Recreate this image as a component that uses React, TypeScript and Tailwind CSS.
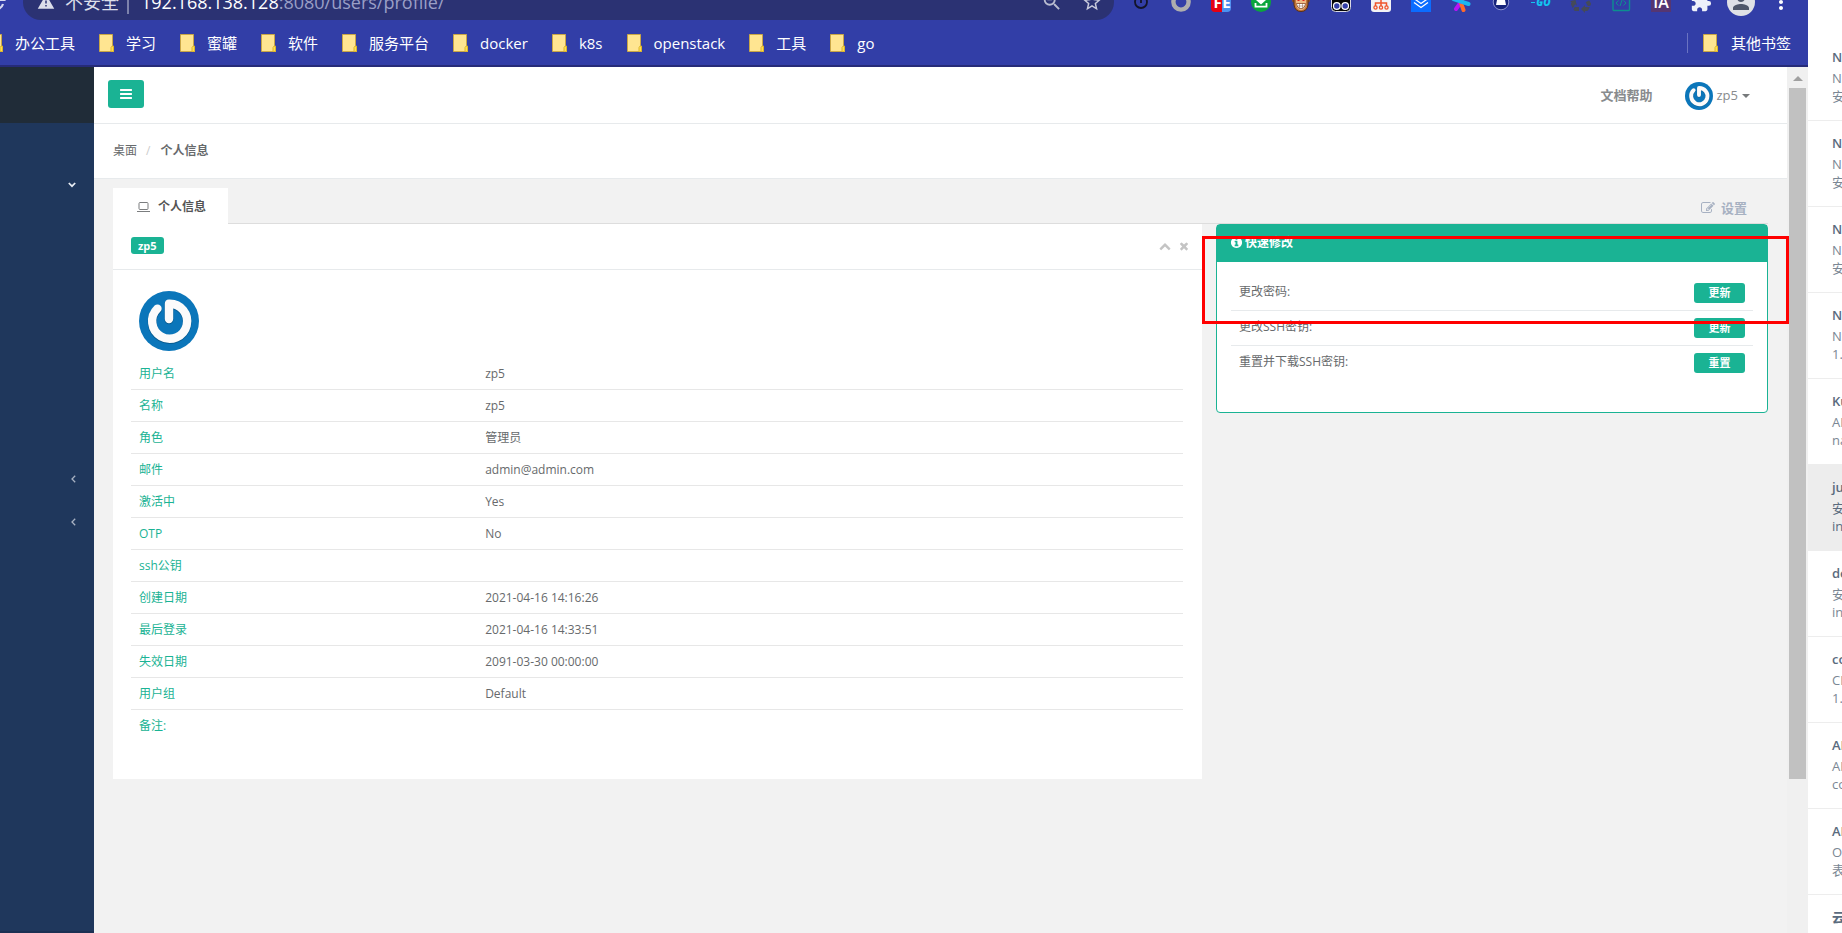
import type { ReactNode } from "react";
import { MdOutlineStarBorder, MdOutlineZoomOut, MdWarning, MdPerson, MdExtension, MdMoreVert, MdRecycling } from "react-icons/md";

const bookmarks = ["办公工具", "学习", "蜜罐", "软件", "服务平台", "docker", "k8s", "openstack", "工具", "go"];

const profile: [string, string][] = [
  ["用户名", "zp5"],
  ["名称", "zp5"],
  ["角色", "管理员"],
  ["邮件", "admin@admin.com"],
  ["激活中", "Yes"],
  ["OTP", "No"],
  ["ssh公钥", ""],
  ["创建日期", "2021-04-16 14:16:26"],
  ["最后登录", "2021-04-16 14:33:51"],
  ["失效日期", "2091-03-30 00:00:00"],
  ["用户组", "Default"],
  ["备注:", ""],
];

const quickActions: [string, string][] = [
  ["更改密码:", "更新"],
  ["更改SSH密钥:", "更新"],
  ["重置并下载SSH密钥:", "重置"],
];

const notes: { lines: [string, string, string]; active?: boolean }[] = [
  { lines: ["NA", "NS", "安"] },
  { lines: ["NA", "NS", "安"] },
  { lines: ["NA", "NS", "安"] },
  { lines: ["NA", "NS", "1."] },
  { lines: ["Ku", "AP", "na"] },
  { lines: ["ju", "安", "in"], active: true },
  { lines: ["de", "安", "in"] },
  { lines: ["co", "CD", "1."] },
  { lines: ["AP", "AP", "co"] },
  { lines: ["AP", "Op", "表"] },
  { lines: ["云", "云", ""] },
];

function Glyph({ d, className }: { d: string; className: string }) {
  return (
    <svg viewBox="0 0 1792 1792" fill="currentColor" className={className} aria-hidden="true">
      <path d={d} />
    </svg>
  );
}

const bars =
  "M1664 1344v128q0 26-19 45t-45 19h-1408q-26 0-45-19t-19-45v-128q0-26 19-45t45-19h1408q26 0 45 19t19 45zm0-512v128q0 26-19 45t-45 19h-1408q-26 0-45-19t-19-45v-128q0-26 19-45t45-19h1408q26 0 45 19t19 45zm0-512v128q0 26-19 45t-45 19h-1408q-26 0-45-19t-19-45v-128q0-26 19-45t45-19h1408q26 0 45 19t19 45z";
const times =
  "M1490 1322q0 40-28 68l-136 136q-28 28-68 28t-68-28l-294-294-294 294q-28 28-68 28t-68-28l-136-136q-28-28-28-68t28-68l294-294-294-294q-28-28-28-68t28-68l136-136q28-28 68-28t68 28l294 294 294-294q28-28 68-28t68 28l136 136q28 28 28 68t-28 68l-294 294 294 294q28 28 28 68z";
const chevronUp =
  "M1683 1331l-166 165q-19 19-45 19t-45-19l-531-531-531 531q-19 19-45 19t-45-19l-166-165q-19-19-19-45.5t19-45.5l742-741q19-19 45-19t45 19l742 741q19 19 19 45.5t-19 45.5z";
const edit =
  "M888 1184l116-116-152-152-116 116v56h96v96h56zm440-720q-16-16-33 1l-350 350q-17 17-1 33t33-1l350-350q17-17 1-33zm80 594v190q0 119-84.5 203.5t-203.5 84.5h-832q-119 0-203.5-84.5t-84.5-203.5v-832q0-119 84.5-203.5t203.5-84.5h832q63 0 117 25 15 7 18 23 3 17-9 29l-49 49q-14 14-32 8-23-6-45-6h-832q-66 0-113 47t-47 113v832q0 66 47 113t113 47h832q66 0 113-47t47-113v-126q0-13 9-22l64-64q15-15 35-7t20 29zm-96-738l288 288-672 672h-288v-288zm444 132l-92 92-288-288 92-92q28-28 68-28t68 28l152 152q28 28 28 68t-28 68z";
const info =
  "M1152 1376v-160q0-14-9-23t-23-9h-96v-512q0-14-9-23t-23-9h-320q-14 0-23 9t-9 23v160q0 14 9 23t23 9h96v320h-96q-14 0-23 9t-9 23v160q0 14 9 23t23 9h448q14 0 23-9t9-23zm-128-896v-160q0-14-9-23t-23-9h-192q-14 0-23 9t-9 23v160q0 14 9 23t23 9h192q14 0 23-9t9-23zm640 416q0 209-103 385.5t-279.5 279.5-385.5 103-385.5-103-279.5-279.5-103-385.5 103-385.5 279.5-279.5 385.5-103 385.5 103 279.5 279.5 103 385.5z";

function Avatar({ className }: { className: string }) {
  return (
    <svg viewBox="0 0 60 60" className={className} role="img" aria-label="avatar">
      <circle cx="30" cy="30" r="30" fill="#0b76ba" />
      <path
        d="M18.5 17.6A17.5 17.5 0 1 0 30 12.7V28"
        transform="translate(0 .8)"
        fill="none"
        stroke="#000"
        strokeOpacity=".22"
        strokeWidth="9"
        strokeLinecap="round"
        strokeLinejoin="round"
      />
      <path
        d="M18.5 17.6A17.5 17.5 0 1 0 30 12.7V28"
        fill="none"
        stroke="#fbfbfb"
        strokeWidth="8.4"
        strokeLinecap="round"
        strokeLinejoin="round"
      />
    </svg>
  );
}

function Folder() {
  return (
    <svg viewBox="0 0 15 18" className="h-[18px] w-[15px] shrink-0" aria-hidden="true">
      <path d="M.5.5h13V12l1 1v4.5H.5z" fill="#ffe591" stroke="#c9a646" />
      <path d="M12 17v-3.5q0-1.5 2.5-1.5v5.5h-2z" fill="#ffe04a" stroke="#dcb52e" />
    </svg>
  );
}

const icon = "size-5";

const extensions: { name: string; art: ReactNode }[] = [
  {
    name: "定时",
    art: (
      <svg viewBox="0 0 20 20" className={icon}>
        <circle cx="10" cy="10" r="6" fill="none" stroke="#12142a" strokeWidth="1.8" />
        <path d="M10 5v6" stroke="#12142a" strokeWidth="1.8" />
      </svg>
    ),
  },
  {
    name: "圆环",
    art: (
      <svg viewBox="0 0 20 20" className={icon}>
        <circle cx="10" cy="10" r="7.6" fill="none" stroke="#aeaeae" strokeWidth="4.4" />
      </svg>
    ),
  },
  {
    name: "FE",
    art: (
      <span className="flex h-5 w-5 overflow-hidden rounded-sm text-[15px] leading-5 font-bold text-white">
        <span className="w-[11px] bg-[#e60012] pl-0.5">F</span>
        <span className="w-[9px] bg-[#4a90f0]">E</span>
      </span>
    ),
  },
  {
    name: "下载",
    art: (
      <svg viewBox="0 0 20 20" className={icon}>
        <circle cx="10" cy="10" r="10" fill="#0ba53c" />
        <path d="M8 4h4v4h3l-5 4.5L5 8h3z" fill="#fff" />
        <path d="M4.5 11v3.6h11V11" fill="none" stroke="#fff" strokeWidth="1.8" />
      </svg>
    ),
  },
  {
    name: "猴子",
    art: (
      <svg viewBox="0 0 20 20" className={icon}>
        <circle cx="3.6" cy="8" r="2.6" fill="#8a4b22" />
        <circle cx="16.4" cy="8" r="2.6" fill="#8a4b22" />
        <path d="M3 4h14v9q-1 6.500-7 6.500T3 13z" fill="#c4763a" stroke="#5c2f12" />
        <path d="M5 8h10v5q-1 5-5 5t-5-5z" fill="#efbb85" />
        <path d="M5.500 11.500h9q-.5 5-4.500 5t-4.500-5z" fill="#fff" stroke="#7b3a14" strokeWidth=".7" />
        <path d="M6 14h8M8.500 11.500v5M11.500 11.500v5" stroke="#7b3a14" strokeWidth=".4" />
        <path d="M7.500 6.500v2.500M12.500 6.500v2.500" stroke="#e0201b" strokeWidth="2" />
      </svg>
    ),
  },
  {
    name: "脚本",
    art: (
      <svg viewBox="0 0 20 20" className={icon}>
        <rect x=".5" y=".5" width="19" height="19" rx="4" fill="#050505" stroke="#d9d9e5" />
        <circle cx="5.800" cy="14" r="3.300" fill="#323ea7" stroke="#fff" strokeWidth="1.200" />
        <circle cx="14.200" cy="14" r="3.300" fill="#323ea7" stroke="#fff" strokeWidth="1.200" />
      </svg>
    ),
  },
  {
    name: "结构",
    art: (
      <svg viewBox="0 0 20 20" className={icon}>
        <rect width="20" height="20" rx="3" fill="#f3f3f5" />
        <path d="M10 6v8M4.500 14v-3h11v3" fill="none" stroke="#f0562b" strokeWidth="1.500" />
        <rect x="7" y="3" width="6" height="4.500" fill="#f0562b" />
        <g fill="none" stroke="#f0562b" strokeWidth="1.300">
          <circle cx="4.500" cy="15.500" r="1.600" />
          <circle cx="10" cy="15.500" r="1.600" />
          <circle cx="15.500" cy="15.500" r="1.600" />
        </g>
      </svg>
    ),
  },
  {
    name: "掘金",
    art: (
      <svg viewBox="0 0 20 20" className={icon}>
        <rect width="20" height="20" fill="#0b6cff" />
        <path d="M3 6.500l7 5 7-5M3 10.500l7 5 7-5" fill="none" stroke="#fff" strokeWidth="1.300" />
      </svg>
    ),
  },
  {
    name: "星形",
    art: (
      <svg viewBox="0 0 20 20" className={icon} strokeWidth="4" strokeLinecap="round">
        <path d="M10 10L5 17" stroke="#b514f5" />
        <path d="M10 11l2.500 7" stroke="#ff6a2b" />
        <path d="M14 3l-4 7" stroke="#f0249a" />
        <path d="M2.500 7l15 5" stroke="#19b6f2" />
      </svg>
    ),
  },
  {
    name: "云盘",
    art: (
      <svg viewBox="0 0 20 20" className={icon}>
        <circle cx="10" cy="10" r="7.800" fill="#17247c" stroke="#8c93cf" />
        <path d="M6 8h2.500V5h3v3H14l1 5H5z" fill="#fff" />
      </svg>
    ),
  },
  {
    name: "GO",
    art: (
      <span className="flex h-5 items-center text-[10px] font-extrabold text-[#12c4f0] italic">
        <span className="mr-px h-px w-1 bg-[#12c4f0]" />
        GO
      </span>
    ),
  },
  { name: "循环", art: <MdRecycling className="size-6 text-[#454a58]" /> },
  {
    name: "代码",
    art: (
      <svg viewBox="0 0 20 20" className={icon} fill="none" stroke="#0c8f8f" strokeWidth="1.400">
        <rect x="2" y="1" width="16.500" height="17.500" rx="1" />
        <path d="M7.500 8.500L5 11l2.500 2.500M12.500 8.500L15 11l-2.500 2.500M11 8l-2 6" strokeWidth="1" />
      </svg>
    ),
  },
  {
    name: "IA",
    art: (
      <span className="flex h-5 w-5 items-center justify-center bg-[#553672] text-base font-semibold text-white">IA</span>
    ),
  },
  { name: "扩展程序", art: <MdExtension className="size-[22px] text-[#eef0fa]" /> },
  {
    name: "用户",
    art: (
      <span className="flex size-7 items-center justify-center overflow-hidden rounded-full bg-[#dfe1e6]">
        <MdPerson className="size-6 text-[#50586a]" />
      </span>
    ),
  },
  { name: "菜单", art: <MdMoreVert className="size-6 text-white" /> },
];

function BrowserChrome() {
  return (
    <header className="flex h-[67px] shrink-0 flex-col overflow-hidden border-b-2 border-[#262b78] bg-[#323ea7] text-white">
      <div className="flex h-5 shrink-0 items-end">
        <div className="flex h-9 w-[23px] shrink-0 items-center overflow-hidden">
          <svg viewBox="0 0 20 20" className="-ml-3.5 size-5 shrink-0" fill="none" stroke="#d5d8f0" strokeWidth="2.200">
            <path d="M17 12a7.500 7.500 0 1 1-2-7.500" />
            <path d="M18.500 2v6h-6" />
          </svg>
        </div>
        <div className="flex h-9 min-w-0 flex-1 items-center rounded-full bg-[#2b3273] pr-[11px] pl-3.5 text-lg leading-6">
          <MdWarning className="size-[18px] shrink-0 text-[#dcdeea]" />
          <span className="ml-2.5 shrink-0 text-[#dcdeea]">不安全</span>
          <span className="mx-2 h-6 w-0.5 shrink-0 bg-[#7d82ab]" />
          <span className="ml-1 flex-1 truncate text-[#9a9fc6]">
            <span className="text-white">192.168.138.128</span>:8080/users/profile/
          </span>
          <button type="button" aria-label="缩小" className="mr-[18px]">
            <MdOutlineZoomOut className="size-[22px] text-[#b9bcd0]" />
          </button>
          <button type="button" aria-label="收藏">
            <MdOutlineStarBorder className="size-[22px] text-[#c9cbdd]" />
          </button>
        </div>
        <div className="ml-[7px] flex h-9 shrink-0 items-center pr-[7px]">
          {extensions.map((e) => (
            <button key={e.name} type="button" aria-label={e.name} className="flex w-10 items-center justify-center">
              {e.art}
            </button>
          ))}
        </div>
      </div>
      <nav className="flex flex-1 items-center pr-[17px] text-[15px] leading-5 whitespace-nowrap">
        <div className="-ml-3 flex items-center gap-6">
          {bookmarks.map((b) => (
            <a key={b} href="#" className="flex items-center gap-3">
              <Folder />
              {b}
            </a>
          ))}
        </div>
        <div className="ml-auto flex items-center">
          <span className="mr-[15px] h-5 w-px bg-[#6a73c2]" />
          <a href="#" className="flex items-center gap-[13px]">
            <Folder />
            其他书签
          </a>
        </div>
      </nav>
    </header>
  );
}

function Sidebar() {
  return (
    <aside className="flex w-[94px] shrink-0 flex-col border-b-2 border-[#1b3053] bg-[#1f375c]">
      <div className="h-14 bg-[#202c38]" />
      <nav className="flex flex-col pt-10">
        <div className="pb-[251px]">
          <button type="button" aria-label="收起" className="flex h-[43px] w-full items-center justify-end pr-[18px]">
            <svg viewBox="0 0 8 6" className="h-1.5 w-2" fill="none" stroke="#e8edf3" strokeWidth="1.700">
              <path d="M.8 1L4 4.200 7.200 1" />
            </svg>
          </button>
        </div>
        {["a", "b"].map((k) => (
          <button key={k} type="button" aria-label="展开" className="flex h-[43px] w-full items-center justify-end pr-[18px]">
            <svg viewBox="0 0 5 8" className="h-2 w-[5px]" fill="none" stroke="#a7b1c2" strokeWidth="1.300">
              <path d="M4.200 .8L1 4l3.200 3.200" />
            </svg>
          </button>
        ))}
      </nav>
    </aside>
  );
}

function Page() {
  return (
    <main className="min-w-0 flex-1 bg-[#f2f2f2] text-xs text-[#676a6c]">
      <div className="flex h-[57px] items-start justify-between border-b border-[#e7eaec] bg-white pr-[37px] pl-3.5">
        <button
          type="button"
          aria-label="切换导航"
          className="mt-[13px] flex h-7 w-9 items-center justify-center rounded-[3px] bg-[#1ab394] text-white"
        >
          <Glyph d={bars} className="size-3.5" />
        </button>
        <div className="flex h-[57px] items-center text-[13px]">
          <a href="#" className="mr-8 font-semibold text-[#888b8d]">
            文档帮助
          </a>
          <a href="#" className="flex items-center text-[#888b8d]">
            <Avatar className="mr-1 size-7" />
            zp5
            <svg viewBox="0 0 8 4" className="ml-1 h-1 w-2" fill="#777a7c" aria-hidden="true">
              <path d="M0 0h8L4 4z" />
            </svg>
          </a>
        </div>
      </div>
      <nav className="flex h-[55px] items-center border-b border-[#e7eaec] bg-white pl-[19px]">
        <a href="#">桌面</a>
        <span className="mr-2.5 ml-[9px] text-[#ccc]">/</span>
        <strong className="font-semibold">个人信息</strong>
      </nav>

      <div className="pt-[9px] pr-[19px] pl-[19px]">
        <div className="flex items-stretch">
          <button
            type="button"
            className="flex h-9 items-center bg-white pt-0.5 pr-[22px] pl-6 font-semibold text-[#555]"
          >
            <svg viewBox="0 0 13 10" className="mr-2 h-2.5 w-[13px]" fill="none" stroke="#7b7d7f" aria-hidden="true">
              <rect x="2" y=".5" width="9" height="7" rx="1" />
              <path d="M0 9.500h13" />
            </svg>
            个人信息
          </button>
          <div className="flex flex-1 items-center justify-end border-b border-[#ddd] pt-1.5 pr-[21px]">
            <a href="#" className="flex items-center gap-1.5 text-[13px] font-semibold text-[#a7b1c2]">
              <Glyph d={edit} className="size-3.5" />
              设置
            </a>
          </div>
        </div>

        <div className="grid grid-cols-[1089fr_552fr] items-start gap-3.5">
          <section className="bg-white pb-[37px]">
            <div className="flex h-[46px] items-center justify-between border-b border-[#e7eaec] pr-3 pb-0.5 pl-[18px]">
              <span className="rounded-[3px] bg-[#1ab394] px-[7px] text-[11px] leading-[17px] font-bold text-white">zp5</span>
              <div className="flex items-center gap-[7px] text-[#c4c4c4]">
                <button type="button" aria-label="折叠">
                  <Glyph d={chevronUp} className="size-3" />
                </button>
                <button type="button" aria-label="关闭">
                  <Glyph d={times} className="size-3" />
                </button>
              </div>
            </div>
            <div className="pt-[21px] pr-[19px] pl-[18px]">
              <Avatar className="mb-[7px] ml-2 size-[60px]" />
              <table className="w-full table-fixed border-separate border-spacing-0">
                <tbody>
                  {profile.map(([label, value]) => (
                    <tr key={label} className="group h-8">
                      <th
                        scope="row"
                        className="w-[33%] border-b border-[#e7e7e7] px-2 text-left font-normal text-[#1ab394] group-last:border-transparent"
                      >
                        {label}
                      </th>
                      <td className="border-b border-[#e7e7e7] px-[7px] group-last:border-transparent">{value}</td>
                    </tr>
                  ))}
                </tbody>
              </table>
            </div>
          </section>

          <section className="relative rounded border border-[#1ab394] bg-white">
            <h2 className="flex h-[37px] items-center gap-0.5 bg-[#1ab394] px-[13px] pb-0.5 text-xs font-semibold text-white">
              <Glyph d={info} className="size-[13px]" />
              快速修改
            </h2>
            <div className="px-3.5 pt-3.5 pb-[31px]">
              <table className="w-full border-separate border-spacing-0">
                <tbody>
                  {quickActions.map(([label, action]) => (
                    <tr key={label} className="group h-[35px]">
                      <td className="border-b border-[#e7eaec] px-2 pb-0.5 group-last:border-transparent">{label}</td>
                      <td className="border-b border-[#e7eaec] px-2 group-last:border-transparent">
                        <button
                          type="button"
                          aria-label={`${label}${action}`}
                          className="ml-auto block h-5 w-[51px] rounded-[3px] bg-[#1ab394] text-[11px] leading-5 font-bold text-white"
                        >
                          {action}
                        </button>
                      </td>
                    </tr>
                  ))}
                </tbody>
              </table>
            </div>
            <div className="pointer-events-none absolute top-[11px] -right-[22px] -left-[15px] z-10 h-[88px] border-3 border-[#ff0000]" />
          </section>
        </div>
      </div>
    </main>
  );
}

function ScrollTrack() {
  return (
    <div className="flex w-[21px] shrink-0 flex-col items-center bg-[#f0f0f0]">
      <div className="flex h-[21px] items-center pt-0.5">
        <svg viewBox="0 0 10 5" className="h-[5px] w-2.5" fill="#a0a0a0" aria-hidden="true">
          <path d="M5 0l5 5H0z" />
        </svg>
      </div>
      <div className="w-[17px] flex-[9] bg-[#c1c1c1]" />
      <div className="flex-[2]" />
    </div>
  );
}

function NoteList() {
  return (
    <aside className="w-[34px] shrink-0 overflow-hidden bg-white pt-[35px] text-[13px] text-[#7b8794]">
      <ul>
        {notes.map(({ lines, active }, i) => (
          <li
            key={i}
            className={
              active
                ? "h-[86px] overflow-hidden border-b border-[#ededed] bg-[#ededed] pt-3 pl-6 text-[#5a6b7e]"
                : "h-[86px] overflow-hidden border-b border-[#ededed] pt-3 pl-6"
            }
          >
            <p className="h-[21px] leading-5 font-semibold text-[#5a6b7e]">{lines[0]}</p>
            <p className="h-[18px] leading-5">{lines[1]}</p>
            <p className="leading-5">{lines[2]}</p>
          </li>
        ))}
      </ul>
    </aside>
  );
}

export default function App() {
  return (
    <div className="flex h-screen overflow-hidden bg-white font-['Open_Sans','Noto_Sans_CJK_SC',sans-serif]">
      <div className="flex min-w-0 flex-1 flex-col">
        <BrowserChrome />
        <div className="flex min-h-0 flex-1">
          <Sidebar />
          <Page />
          <ScrollTrack />
        </div>
      </div>
      <NoteList />
    </div>
  );
}
